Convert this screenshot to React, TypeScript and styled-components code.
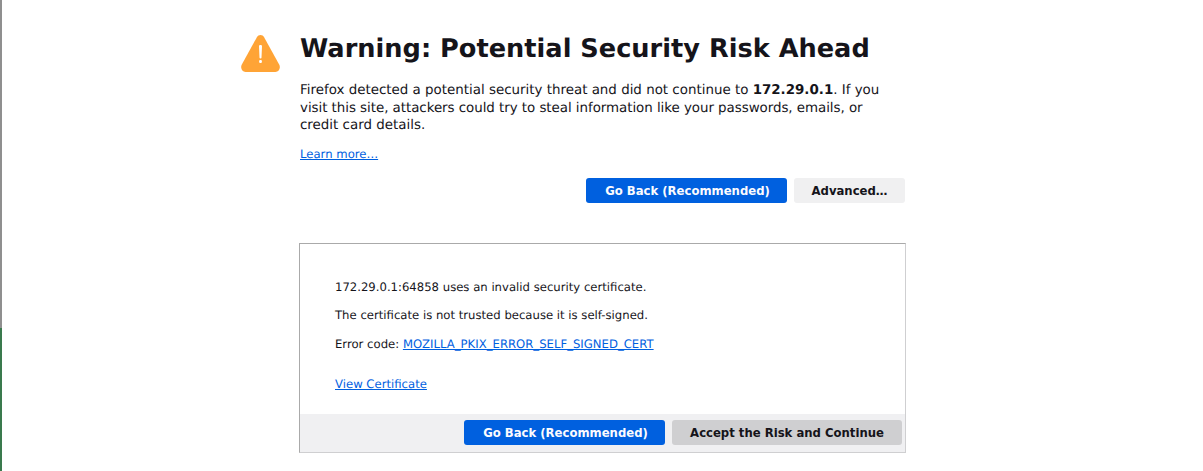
import React from "react";
import styled, { createGlobalStyle } from "styled-components";

const Global = createGlobalStyle`
  html, body { margin: 0; padding: 0; background: #fff; overflow: hidden; }
  body { font-family: "DejaVu Sans", sans-serif; color: #15141a; text-rendering: geometricPrecision; }
`;

const Page = styled.div`
  display: flex;
  width: 1203px;
  height: 471px;
  overflow: hidden;
  background: #fff;
`;

const Edge = styled.div`
  width: 2px;
  height: 471px;
  flex: none;
  display: flex;
  flex-direction: column;
`;

const EdgeTop = styled.div`
  height: 328px;
  background: #8f8f8f;
`;

const EdgeBottom = styled.div`
  flex: 1;
  background: #3a7a4e;
`;

const Container = styled.div`
  margin-left: 239px;
  width: 665px;
  display: flex;
  align-items: flex-start;
`;

const IconSlot = styled.div`
  width: 58px;
  flex: none;
  padding-top: 35px;
  line-height: 0;
`;

const Content = styled.div`
  width: 607px;
  flex: none;
`;

const Title = styled.h1`
  margin: 30px 0 0 1px;
  font-size: 25.64px;
  line-height: 38px;
  font-weight: 700;
  color: #15141a;
`;

const Intro = styled.p`
  margin: 14px 0 0 1px;
  font-size: 13.42px;
  line-height: 17.5px;
  color: #15141a;
`;

const IntroLine = styled.span<{ $tight?: boolean }>`
  display: block;
  white-space: nowrap;
  letter-spacing: ${(p) => (p.$tight ? "-0.045px" : "0")};
`;

const LearnLink = styled.a`
  display: block;
  margin: 11px 0 0 1px;
  font-size: 11.67px;
  line-height: 16px;
  color: #0060df;
  text-decoration: underline;
`;

const Actions = styled.div`
  display: flex;
  justify-content: flex-end;
  gap: 7px;
`;

const TopActions = styled(Actions)`
  margin-top: 16px;
  padding-right: 1px;
`;

const Button = styled.button<{ $variant: "primary" | "light" | "grey"; $width: number }>`
  width: ${(p) => p.$width}px;
  height: 25px;
  padding: 2px 0 0 ${(p) => (p.$variant === "primary" ? 2 : 0)}px;
  border: none;
  border-radius: 3px;
  font-family: "DejaVu Sans", sans-serif;
  font-size: 11.67px;
  font-weight: 700;
  background: ${(p) => (p.$variant === "primary" ? "#0060df" : p.$variant === "light" ? "#f0f0f1" : "#cfcfd1")};
  color: ${(p) => (p.$variant === "primary" ? "#fbfbfe" : "#15141a")};
`;

const Panel = styled.div`
  margin-top: 40px;
  height: 210px;
  box-sizing: border-box;
  border: 1px solid #aaaaaa;
  border-right-color: #cfcfd1;
  border-bottom-color: #cfcfd1;
  display: flex;
  flex-direction: column;
`;

const PanelBody = styled.div`
  flex: 1;
  padding: 35.4px 35px 0;
`;

const Line = styled.p`
  margin: 0 0 12.5px;
  font-size: 11.67px;
  line-height: 16px;
  color: #15141a;
`;

const CodeLink = styled.a`
  color: #0060df;
  text-decoration: underline;
`;

const CertLink = styled.a`
  display: block;
  margin-top: 24px;
  font-size: 11.67px;
  line-height: 16px;
  color: #0060df;
  text-decoration: underline;
`;

const PanelFooter = styled.div`
  height: 38px;
  box-sizing: border-box;
  background: #f0f0f2;
  padding: 6px 3px 6px 0;
`;

export default function App() {
  return (
    <Page>
      <Global />
      <Edge>
        <EdgeTop />
        <EdgeBottom />
      </Edge>
      <Container>
        <IconSlot>
          <svg width="39" height="37" viewBox="0 0 39 37" aria-hidden="true">
            <path
              d="M19.5 0c-1.5 0-2.8 0.8-3.6 2.2L0.7 29.8c-1.5 3 0.4 7.2 3.9 7.2h29.8c3.5 0 5.4-4.2 3.9-7.2L23.1 2.2C22.3 0.8 21 0 19.5 0z"
              fill="#ffa436"
            />
            <path d="M18 11.2c0-0.8 0.6-1.2 1.5-1.2s1.5 0.4 1.5 1.2l-0.5 11.6c0 0.4-0.4 0.7-1 0.7s-1-0.3-1-0.7z" fill="#fff" />
            <rect x="18.1" y="25" width="2.8" height="3" rx="1" fill="#fff" />
          </svg>
        </IconSlot>
        <Content>
          <Title>Warning: Potential Security Risk Ahead</Title>
          <Intro>
            <IntroLine>
              Firefox detected a potential security threat and did not continue to <b>172.29.0.1</b>. If you
            </IntroLine>
            <IntroLine $tight>visit this site, attackers could try to steal information like your passwords, emails, or</IntroLine>
            <IntroLine>credit card details.</IntroLine>
          </Intro>
          <LearnLink href="#">Learn more…</LearnLink>
          <TopActions>
            <Button $variant="primary" $width={201}>Go Back (Recommended)</Button>
            <Button $variant="light" $width={111}>Advanced…</Button>
          </TopActions>
          <Panel>
            <PanelBody>
              <Line>172.29.0.1:64858 uses an invalid security certificate.</Line>
              <Line>The certificate is not trusted because it is self-signed.</Line>
              <Line>
                Error code: <CodeLink href="#">MOZILLA_PKIX_ERROR_SELF_SIGNED_CERT</CodeLink>
              </Line>
              <CertLink href="#">View Certificate</CertLink>
            </PanelBody>
            <PanelFooter>
              <Actions>
                <Button $variant="primary" $width={201}>Go Back (Recommended)</Button>
                <Button $variant="grey" $width={230}>Accept the Risk and Continue</Button>
              </Actions>
            </PanelFooter>
          </Panel>
        </Content>
      </Container>
    </Page>
  );
}
